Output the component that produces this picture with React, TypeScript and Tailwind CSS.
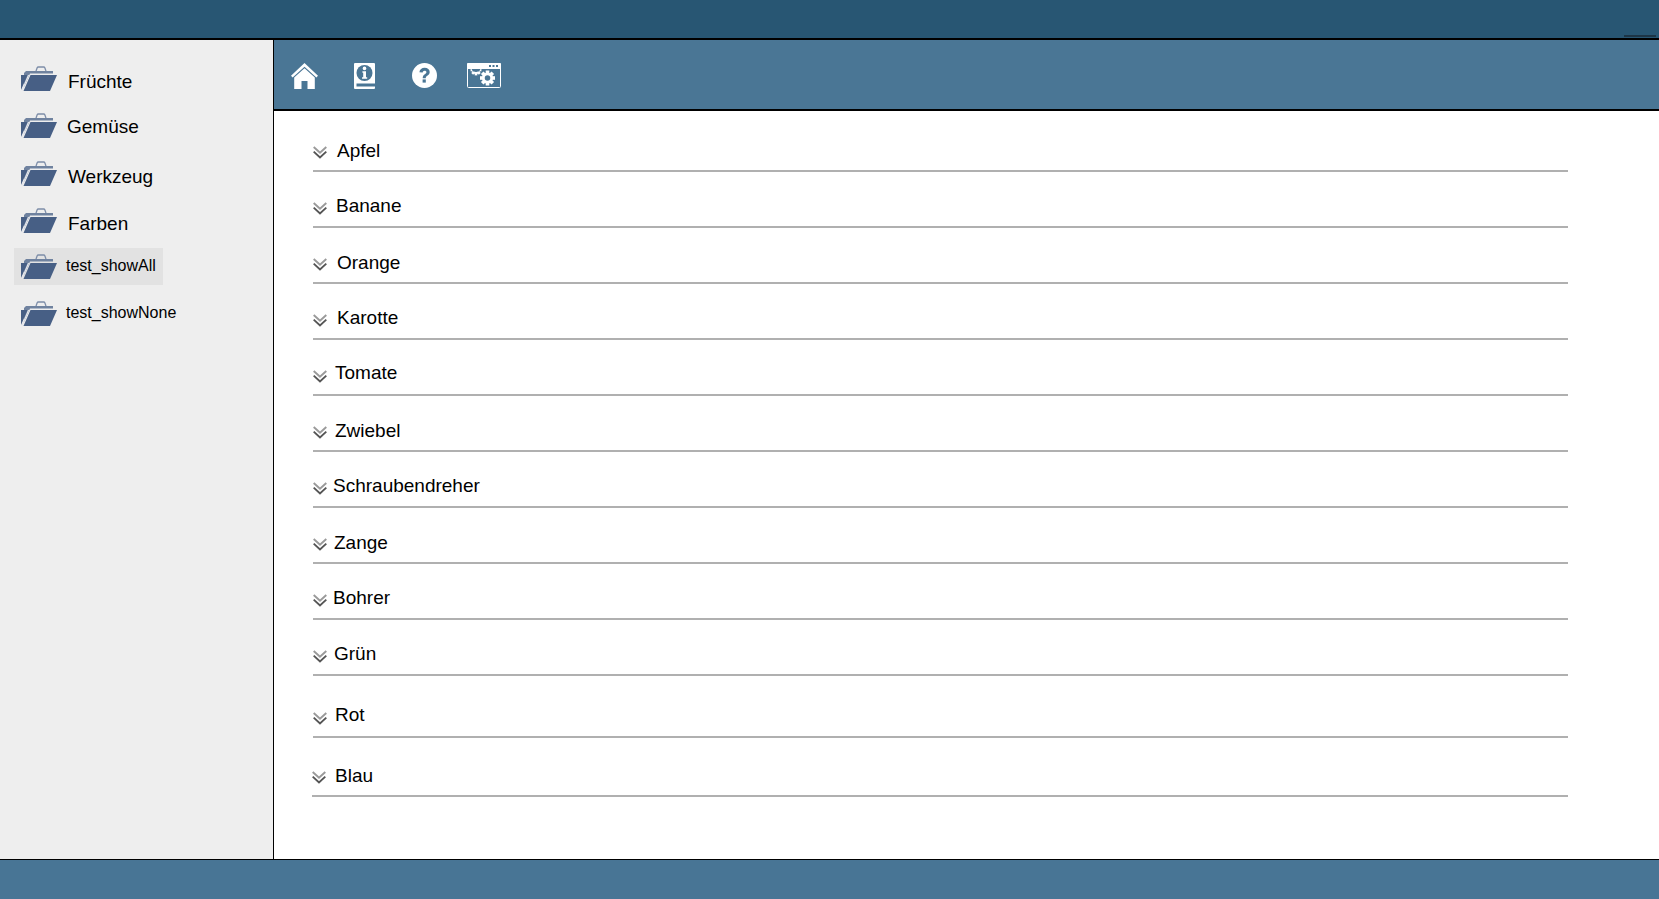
const font = "font-['Liberation_Sans',Arial,sans-serif]";

const folders = [
  { label: 'Früchte', rowClass: 'mt-[20px]', textClass: 'ml-[11px] text-[19px] pt-[7px]' },
  { label: 'Gemüse', rowClass: 'mt-[10px]', textClass: 'ml-[10px] text-[19px] pt-[4px]' },
  { label: 'Werkzeug', rowClass: 'mt-[11px]', textClass: 'ml-[11px] text-[19px] pt-[8px]' },
  { label: 'Farben', rowClass: 'mt-[10px]', textClass: 'ml-[11px] text-[19px] pt-[7px]' },
  { label: 'test_showAll', rowClass: 'mt-[9px] bg-[#e2e2e2]', textClass: 'ml-[9px] text-[16px] -mt-[1px]' },
  { label: 'test_showNone', rowClass: 'mt-[10px]', textClass: 'ml-[9px] text-[16px] -mt-[2px]' },
];

const rows = [
  { label: 'Apfel', rowClass: 'h-[56px]', textClass: 'ml-[10px] mb-[1px]' },
  { label: 'Banane', rowClass: 'h-[56px]', textClass: 'ml-[9px] mb-[2px]' },
  { label: 'Orange', rowClass: 'h-[56px]', textClass: 'ml-[10px] mb-[1px]' },
  { label: 'Karotte', rowClass: 'h-[56px]', textClass: 'ml-[10px] mb-[2px]' },
  { label: 'Tomate', rowClass: 'h-[56px]', textClass: 'ml-[8px] mb-[3px]' },
  { label: 'Zwiebel', rowClass: 'h-[56px]', textClass: 'ml-[8px] mb-[1px]' },
  { label: 'Schraubendreher', rowClass: 'h-[56px]', textClass: 'ml-[6px] mb-[2px]' },
  { label: 'Zange', rowClass: 'h-[56px]', textClass: 'ml-[7px] mb-[1px]' },
  { label: 'Bohrer', rowClass: 'h-[56px]', textClass: 'ml-[6px] mb-[2px]' },
  { label: 'Grün', rowClass: 'h-[56px]', textClass: 'ml-[7px] mb-[2px]' },
  { label: 'Rot', rowClass: 'h-[62px]', textClass: 'ml-[8px] mb-[3px]' },
  { label: 'Blau', rowClass: 'h-[59px] -ml-px', textClass: 'ml-[9px] mb-[1px]' },
];

function FolderIcon() {
  return (
    <svg width="36" height="25" viewBox="0 0 36 25" className="shrink-0">
      <path d="M15 5l1.2-3.2c.2-.5.6-.8 1.1-.8h5.4c.5 0 .9.3 1.1.8L25 5" fill="none" stroke="#7d8da8" strokeWidth="1.3" />
      <path d="M5 5h27v2.5H9L3 21V7z" fill="#6f829f" />
      <path d="M9.5 9H36l-7 16H2.5z" fill="#475f85" />
      <path d="M6.5 9L0 24V9z" fill="#475f85" />
      <path d="M1 24.5L7.6 9" stroke="#e3e6ec" strokeWidth="1.2" fill="none" />
    </svg>
  );
}

function HomeIcon() {
  return (
    <svg width="27" height="26" viewBox="0 0 27 26">
      <path d="M13.5 0L27 12.8l-1.6 1.7L13.5 3.8 1.6 14.5 0 12.8z" fill="#fff" />
      <path d="M13.5 5.2L23.8 14.4V26h-7.3v-8h-6v8H3.2V14.4z" fill="#fff" />
    </svg>
  );
}

function HelpIcon() {
  return (
    <svg width="25" height="25" viewBox="0 0 25 25">
      <circle cx="12.5" cy="12.5" r="12.5" fill="#fff" />
      <path d="M7.4 9.2c.3-2.8 2.4-4.4 5.2-4.4 3 0 5.1 1.7 5.1 4.2 0 1.9-1 2.9-2.4 3.8-1.1.7-1.5 1.2-1.5 2.4h-3.1c0-2.1.7-3 2.1-4 1-.7 1.6-1.1 1.6-2 0-1-.7-1.5-1.8-1.5-1.2 0-1.8.7-1.9 1.9z" fill="#4a7695" />
      <rect x="10.6" y="16.4" width="3.2" height="3.2" fill="#4a7695" />
    </svg>
  );
}

function BookIcon() {
  return (
    <svg width="21" height="26" viewBox="0 0 21 26">
      <rect width="21" height="26" rx="1" fill="#fff" />
      <rect x="2.5" y="20.5" width="18.5" height="3" fill="#4a7695" />
      <circle cx="10.5" cy="10" r="8" fill="#4a7695" />
      <circle cx="10.5" cy="5.4" r="1.8" fill="#fff" />
      <path d="M8.4 8.2h3.6v6h1.2v1.6H8v-1.6h1.2V9.8h-.8z" fill="#fff" />
    </svg>
  );
}

function Gear({ x, y, r }: { x: number; y: number; r: number }) {
  return (
    <g>
      {[0, 45, 90, 135].map((a) => (
        <rect
          key={a}
          x={x - r * 0.36}
          y={y - r * 1.5}
          width={r * 0.72}
          height={r * 3}
          fill="#fff"
          transform={`rotate(${a} ${x} ${y})`}
        />
      ))}
      <circle cx={x} cy={y} r={r * 1.1} fill="#fff" />
      <circle cx={x} cy={y} r={r * 0.55} fill="#4a7695" />
    </g>
  );
}

function WindowIcon() {
  return (
    <svg width="34" height="25" viewBox="0 0 34 25">
      <rect x="0.5" y="0.5" width="33" height="24" rx="1" fill="#4a7695" stroke="#fff" />
      <Gear x={9} y={7} r={3.6} />
      <rect width="34" height="6" rx="1" fill="#fff" />
      <path d="M4.5 6h9l-1.4 2.6H5.9z" fill="#4a7695" />
      <rect x="22" y="2" width="2" height="2" fill="#4a7695" />
      <rect x="25.5" y="2" width="2" height="2" fill="#4a7695" />
      <rect x="29" y="2" width="2" height="2" fill="#4a7695" />
      <Gear x={20.5} y={15} r={5} />
    </svg>
  );
}

function Chevrons() {
  return (
    <svg width="14" height="13" viewBox="0 0 14 13" className="mb-[4px] shrink-0">
      <path d="M.7 1L7 6.8 13.3 1" fill="none" stroke="#9a9a9a" strokeWidth="1.9" />
      <path d="M.7 5.6L7 11.4l6.3-5.8" fill="none" stroke="#555" strokeWidth="1.9" />
    </svg>
  );
}

export default function App() {
  return (
    <div className={`${font} flex h-[899px] w-[1659px] flex-col overflow-hidden bg-white text-black`}>
      <header className="relative h-[40px] shrink-0 border-b-2 border-black bg-[#285673]">
        <div className="absolute right-[3px] bottom-[1px] h-[2px] w-[32px] bg-[#1d3546]" />
      </header>

      <div className="flex min-h-0 flex-1">
        <aside className="w-[274px] shrink-0 border-r border-black bg-[#eeeeee] pl-[14px]">
          {folders.map((f) => (
            <div key={f.label} className={`flex h-[37px] w-fit min-w-[149px] items-center pr-[7px] pl-[7px] ${f.rowClass}`}>
              <FolderIcon />
              <span className={`whitespace-nowrap ${f.textClass}`}>{f.label}</span>
            </div>
          ))}
        </aside>

        <main className="min-w-0 flex-1">
          <div className="flex h-[71px] items-center border-b-2 border-black bg-[#4a7695] pt-[2px]">
            <div className="ml-[17px]">
              <HomeIcon />
            </div>
            <div className="ml-[36px]">
              <BookIcon />
            </div>
            <div className="ml-[37px]">
              <HelpIcon />
            </div>
            <div className="ml-[30px]">
              <WindowIcon />
            </div>
          </div>

          <ul className="ml-[39px] w-[1255px] pt-[5px]">
            {rows.map((r) => (
              <li key={r.label} className={`flex items-end border-b-2 border-[#b0b0b0] pb-[7px] ${r.rowClass}`}>
                <Chevrons />
                <span className={`text-[19px] leading-[22px] ${r.textClass}`}>{r.label}</span>
              </li>
            ))}
          </ul>
        </main>
      </div>

      <footer className="h-[40px] shrink-0 border-t border-black bg-[#487595]" />
    </div>
  );
}
